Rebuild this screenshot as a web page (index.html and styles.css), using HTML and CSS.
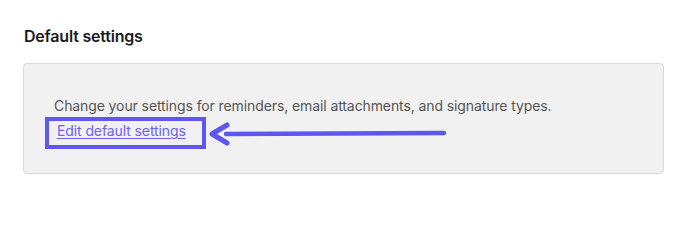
FILE: index.html
```html
<!DOCTYPE html>
<html lang="en">
<head>
<meta charset="utf-8">
<title>Default settings</title>
<link rel="stylesheet" href="styles.css">
</head>
<body>
<section class="settings">
  <h2 class="settings-title">Default settings</h2>
  <div class="card">
    <p class="card-text">Change your settings for reminders, email attachments, and signature types.</p>
    <a class="card-link" href="#">Edit default settings</a>
    <span class="highlight-box"></span>
    <svg class="arrow" width="240" height="24" viewBox="0 0 240 24" aria-hidden="true">
      <path d="M18 12 L236 11" stroke="#5f55f0" stroke-width="4.5" stroke-linecap="round" fill="none"/>
      <path d="M19 3 L4 12 L19 21" stroke="#5f55f0" stroke-width="5" stroke-linecap="round" stroke-linejoin="round" fill="none"/>
    </svg>
  </div>
</section>
</body>
</html>
```

FILE: styles.css
```css
html, body {
  margin: 0;
  padding: 0;
  background: #ffffff;
}

body {
  font-family: Inter, "Noto Sans", "Liberation Sans", sans-serif;
  color: #1e1e1e;
}

.settings {
  padding: 26px 22px 0 23px;
}

.settings-title {
  margin: 0 0 17px 1px;
  font-size: 16px;
  line-height: 20px;
  font-weight: 600;
  letter-spacing: -0.2px;
  color: #1a1a1a;
}

.card {
  position: relative;
  width: 639px;
  height: 109px;
  box-sizing: content-box;
  background: #f1f1f1;
  border: 1px solid #d9d9d9;
  border-radius: 4px;
  padding: 0;
}

.card-text {
  margin: 32px 0 0 30px;
  font-size: 14px;
  line-height: 20px;
  color: #555555;
  letter-spacing: -0.1px;
}

.card-link {
  display: inline-block;
  margin: 5px 0 0 33px;
  font-size: 14px;
  line-height: 20px;
  color: #6f5ff2;
  text-decoration: underline;
  text-underline-offset: 2px;
  letter-spacing: -0.1px;
}

.highlight-box {
  position: absolute;
  left: 21px;
  top: 53px;
  width: 153px;
  height: 24px;
  border: 4px solid #5f55f0;
}

.arrow {
  position: absolute;
  left: 184px;
  top: 58px;
}
```
